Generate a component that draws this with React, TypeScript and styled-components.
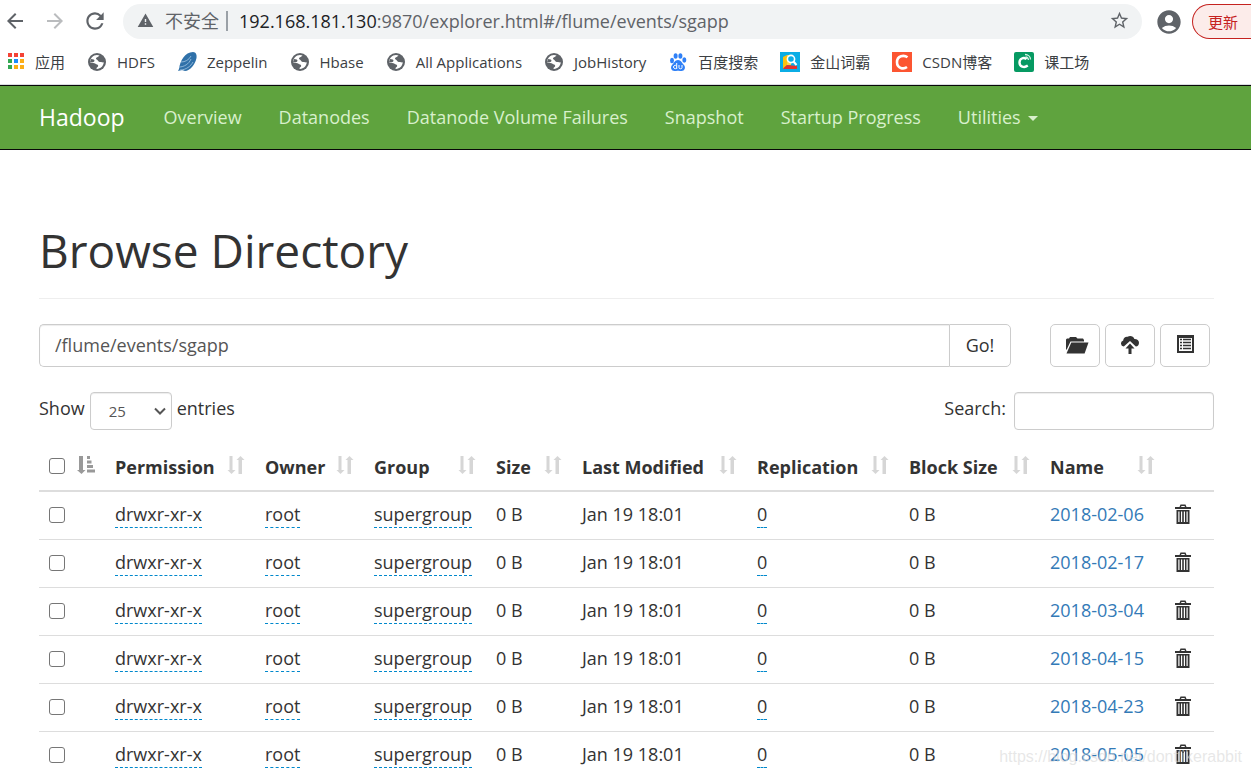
import React from "react";
import styled, { createGlobalStyle } from "styled-components";
import {
  MdArrowBack,
  MdArrowForward,
  MdRefresh,
  MdWarning,
  MdStarBorder,
  MdAccountCircle,
} from "react-icons/md";

const GlobalStyle = createGlobalStyle`
  *, *::before, *::after { box-sizing: border-box; }
  body {
    margin: 0;
    background: #fff;
    color: #333;
    font-family: "Open Sans", "Noto Sans", "Noto Sans CJK SC", sans-serif;
    font-size: 18px;
    line-height: 26px;
  }
  a { text-decoration: none; }
  button, input, select { font-family: inherit; }
`;

const Window = styled.div`
  position: relative;
  display: flex;
  flex-direction: column;
  height: 100vh;
  overflow: hidden;
`;

/* ---------- browser chrome ---------- */

const Toolbar = styled.div`
  display: flex;
  align-items: center;
  height: 43px;
  padding-left: 3px;
  flex: none;
`;

const ToolButton = styled.button<{ $faded?: boolean }>`
  display: flex;
  align-items: center;
  justify-content: center;
  width: 40px;
  height: 35px;
  padding: 0 16px 2px 0;
  border: 0;
  background: none;
  color: ${(p) => (p.$faded ? "#babcbe" : "#5f6368")};
  svg { flex: none; }
`;

const AddressBar = styled.div`
  display: flex;
  flex: 1;
  align-items: center;
  height: 35px;
  padding: 0 12px 2px 14px;
  border-radius: 18px;
  background: #f1f3f4;
  color: #5f6368;
`;

const Insecure = styled.span`
  display: flex;
  align-items: center;
  gap: 11px;
  padding-right: 7px;
`;

const Divider = styled.span`
  width: 2px;
  height: 20px;
  margin-right: 11px;
  background: #9aa0a6;
`;

const Address = styled.div`
  flex: 1;
  white-space: nowrap;
  b { font-weight: 400; color: #202124; }
`;

const StarButton = styled.button`
  display: flex;
  padding: 0;
  border: 0;
  background: none;
  color: #5f6368;
`;

const ProfileButton = styled(StarButton)`
  margin: 0 9px 0 13px;
`;

const UpdateButton = styled.button`
  height: 35px;
  padding: 0 13px 0 15px;
  border: 1px solid #c5221f;
  border-right: 0;
  border-radius: 18px 0 0 18px;
  background: #fcecea;
  color: #c5221f;
  font-size: 15px;
`;

const Bookmarks = styled.nav`
  display: flex;
  align-items: center;
  gap: 22px;
  height: 42px;
  padding: 0 5px 4px;
  border-bottom: 1px solid #dadce0;
  flex: none;
`;

const Bookmark = styled.a`
  display: flex;
  align-items: center;
  gap: 10px;
  color: #3c4043;
  font-size: 15px;
  line-height: 20px;
  white-space: nowrap;
`;

/* ---------- hadoop page ---------- */

const Page = styled.div`
  flex: 1;
  min-height: 0;
  overflow: hidden;
`;

const Navbar = styled.nav`
  display: flex;
  align-items: center;
  gap: 37px;
  height: 65px;
  padding: 0 39px 2px;
  border-top: 1px solid #080808;
  border-bottom: 1px solid #080808;
  background: #5fa33e;
`;

const Brand = styled.a`
  margin-right: 2px;
  color: #fff;
  font-size: 23px;
`;

const NavLink = styled.a`
  color: #d8f0cc;
  white-space: nowrap;
`;

const Caret = styled.span`
  display: inline-block;
  margin-left: 7px;
  border: 5px solid transparent;
  border-top-color: currentColor;
  border-bottom: 0;
  vertical-align: middle;
`;

const Container = styled.main`
  padding: 72px 37px 0 39px;
`;

const PageHeader = styled.header`
  padding-bottom: 20px;
  border-bottom: 1px solid #eee;
  margin-bottom: 25px;
`;

const Title = styled.h1`
  margin: 0;
  font-size: 46px;
  font-weight: 400;
  line-height: 56px;
`;

const PathRow = styled.form`
  display: flex;
  height: 43px;
  margin-bottom: 25px;
`;

const PathInput = styled.input`
  flex: 1;
  min-width: 0;
  padding: 0 15px 2px;
  border: 1px solid #ccc;
  border-right: 0;
  border-radius: 5px 0 0 5px;
  box-shadow: inset 0 1px 1px rgba(0, 0, 0, 0.075);
  color: #555;
  font-size: 18px;
`;

const GoButton = styled.button`
  width: 62px;
  padding: 0 0 2px;
  border: 1px solid #ccc;
  border-radius: 0 5px 5px 0;
  background: #fff;
  color: #333;
  font-size: 18px;
`;

const Actions = styled.div`
  display: flex;
  gap: 5px;
  margin: 0 4px 0 39px;
`;

const ActionButton = styled.button`
  display: flex;
  align-items: center;
  justify-content: center;
  width: 50px;
  padding: 0 0 2px;
  border: 1px solid #ccc;
  border-radius: 5px;
  background: #fff;
  color: #333;
`;

const Controls = styled.div`
  display: flex;
  justify-content: space-between;
  height: 38px;
  margin-bottom: 13px;
`;

const ControlLabel = styled.label`
  display: flex;
  gap: 5px;
  line-height: 32px;
`;

const SelectWrap = styled.span`
  display: grid;
  align-items: center;
  & > * { grid-area: 1 / 1; }
  svg { justify-self: end; margin-right: 6px; pointer-events: none; }
`;

const LengthSelect = styled.select`
  width: 82px;
  height: 38px;
  padding: 0 18px;
  border: 1px solid #ccc;
  border-radius: 4px;
  box-shadow: inset 0 1px 1px rgba(0, 0, 0, 0.075);
  background: #fff;
  color: #555;
  font-size: 15px;
  appearance: none;
`;

const SearchInput = styled.input`
  width: 200px;
  height: 38px;
  margin-left: 3px;
  padding: 0 12px;
  border: 1px solid #ccc;
  border-radius: 4px;
  box-shadow: inset 0 1px 1px rgba(0, 0, 0, 0.075);
  font-size: 16px;
`;

const Table = styled.table`
  width: 100%;
  table-layout: fixed;
  border-collapse: collapse;
  white-space: nowrap;
`;

const HeadCell = styled.th`
  height: 48px;
  padding: 0 10px;
  border-bottom: 2px solid #ddd;
  text-align: left;
  font-weight: 700;
`;

const HeadContent = styled.div`
  display: flex;
  align-items: center;
  justify-content: space-between;
  svg { flex: none; margin-bottom: 4px; }
  input { margin-bottom: 2px; }
`;

const Cell = styled.td`
  height: 48px;
  padding: 0 10px 2px;
  border-bottom: 1px solid #ddd;
`;

const CheckCell = styled(Cell)`
  padding-bottom: 0;
`;

const Check = styled.input`
  display: block;
  appearance: none;
  width: 16px;
  height: 16px;
  margin: 0;
  border: 1px solid #767676;
  border-radius: 3px;
  background: #fff;
`;

const Editable = styled.span`
  padding-bottom: 1px;
  border-bottom: 1px dashed #08c;
`;

const NameLink = styled.a`
  color: #337ab7;
`;

const TrashButton = styled.button`
  display: flex;
  padding: 0;
  border: 0;
  background: none;
  color: #333;
`;

const Watermark = styled.div`
  position: absolute;
  right: 9px;
  bottom: 6px;
  color: rgba(215, 215, 215, 0.6);
  font-family: "Liberation Sans", sans-serif;
  font-size: 16px;
  line-height: 24px;
  pointer-events: none;
`;

/* ---------- icons ---------- */

const AppsIcon = () => (
  <svg width="20" height="20">
    {["#f44336", "#f44336", "#f44336", "#34a853", "#1a8cff", "#fbae17", "#34a853", "#fbae17", "#fbae17"].map(
      (c, i) => (
        <rect key={i} x={3 + (i % 3) * 6} y={1 + Math.floor(i / 3) * 6} width="4" height="4" fill={c} />
      ),
    )}
  </svg>
);

const GlobeIcon = () => (
  <svg width="20" height="20" viewBox="0 0 20 20">
    <circle cx="10" cy="10" r="9" fill="#5f6368" />
    <path
      d="M12.500 3.500C11.800 5 9.500 4.800 9 6.300c-.3 1.300 1.500 1.500 2 2.500.4.900 1.600 1.400 3 1.300 1 0 1.800.5 2.800.2-.3 3.600-3.200 6.500-6.800 6.700-.5-.1-.8-.5-.5-1 .6-.9 1.700-1 1.700-2.200 0-1.300-1.800-1.300-2.700-2C7.400 10.900 5.500 11.300 3 10.300 3 6.300 6.100 3 10 3c.9 0 1.700.2 2.500.5z"
      fill="#fff"
    />
    <path d="M4 6.800c1 .8 2.600.3 3.300 1.300.6 1-.3 2-1.700 2.200L3 10z" fill="#5f6368" />
  </svg>
);

const ZeppelinIcon = () => (
  <svg width="20" height="20" viewBox="0 0 20 20">
    <path d="M2 17C3 9 8 0 16 0c3 0 4 3 3.500 6C18.500 12 13 19 8 19l-3-1-4 1z" fill="#3071a9" />
    <path
      d="M2 15c5 0 10-3 12-8M4 10c4 0 8-2 10-6M3 18c6 0 11-4 13-8"
      stroke="#a5c8e4"
      strokeWidth=".8"
      fill="none"
    />
  </svg>
);

const BaiduIcon = () => (
  <svg width="20" height="20" viewBox="0 0 20 20" fill="#2f80f7">
    <ellipse cx="4" cy="8.500" rx="2" ry="2.700" />
    <ellipse cx="7.600" cy="4" rx="2" ry="2.800" />
    <ellipse cx="12.400" cy="4" rx="2" ry="2.800" />
    <ellipse cx="16.300" cy="8" rx="2" ry="2.700" />
    <path d="M10 8c-3 0-4 3-6 5-2 2.500-.6 6 2.500 6 1.500 0 2-.3 3.500-.3s2 .3 3.500.3c3.100 0 4.500-3.500 2.500-6-2-2-3-5-6-5z" />
    <path
      d="M8.700 11v6M8.500 14.200a1.600 1.600 0 1 0 0 1.600M11 13v2.500q0 1.300 1.500 1.300t1.500-1.300V13"
      fill="none"
      stroke="#fff"
      strokeWidth="1"
    />
  </svg>
);

const JinshanIcon = () => (
  <svg width="20" height="20" viewBox="0 0 20 20">
    <rect width="20" height="20" fill="#0bade5" />
    <path d="M3 5l4-2v10l-4 4z" fill="#ffc20e" />
    <path d="M3 16.500L7 13l10 1v3H4z" fill="#e5322d" />
    <path d="M7 3h4v10H7z" fill="#fbd54a" />
    <circle cx="11" cy="7" r="3.600" fill="#0bade5" stroke="#fff" strokeWidth="1.600" />
    <path d="M13.500 9.500l3 3.500" stroke="#fff" strokeWidth="2" />
  </svg>
);

const CsdnIcon = () => (
  <svg width="20" height="20" viewBox="0 0 20 20">
    <rect width="20" height="20" fill="#fc5531" />
    <path d="M15.500 5.300C12 2.800 5 3.500 5 10.300c0 6.200 6.500 7.200 10 4.700" fill="none" stroke="#fff" strokeWidth="2.600" />
  </svg>
);

const KgcIcon = () => (
  <svg width="20" height="20" viewBox="0 0 20 20">
    <rect width="20" height="20" rx="2" fill="#069a62" />
    <path d="M12.500 7.200C9.500 4.700 5.500 6.700 5.500 10.400c0 4.100 4.500 5.900 8.300 3.200" fill="none" stroke="#fff" strokeWidth="2.400" />
    <path d="M11 2.500c3 0 5.500 2 5.500 5M11.500 5c1.800.2 2.800 1.200 3 3" fill="none" stroke="#d4f1e5" strokeWidth="1.300" />
  </svg>
);

const FolderOpenIcon = () => (
  <svg width="28" height="18" viewBox="-4 0 28 18" fill="currentColor">
    <path d="M1 13V3.500L2 2.500h2L5 1h6l1.500 1.500H18L19 4v1.500H5.500L1.500 14z" />
    <path d="M6.300 6.500H23.500L19.600 17.500H1.500z" />
  </svg>
);

const CloudUploadIcon = () => (
  <svg width="20" height="20" viewBox="0 0 20 20" fill="currentColor">
    <path d="M3.800 11.500a3 3 0 0 1-.6-5.900C3.300 2.800 5.500 1.300 7.700 1.700 9.500.300 13.700.8 14.400 4c2.600-.1 4.600 1.300 4.600 3.800 0 2.200-1.300 3.700-3.200 3.700L10 6z" />
    <path d="M10 8.500l4.500 5h-3V19h-3v-5.500h-3z" />
  </svg>
);

const ListAltIcon = () => (
  <svg width="18" height="20" viewBox="0 0 18 20">
    <path fillRule="evenodd" d="M1 0h17v18H1zM3 3v13h13V3z" fill="currentColor" />
    <path d="M4 4.500h2M4 7.500h2M4 10.500h2M4 13.500h2M7 4.500h8M7 7.500h8M7 10.500h8M7 13.500h8" stroke="currentColor" strokeWidth="1.600" />
  </svg>
);

const SortIcon = () => (
  <svg width="18" height="18" viewBox="0 0 18 18" fill="#d6d6d6">
    <path d="M2.500 0h3v14H8.500L4.500 18 .5 14h2z" />
    <path d="M11.500 18h3.500V4h2.500L13.500 0 9.500 4h2z" />
  </svg>
);

const SortedIcon = () => (
  <svg width="18" height="18" viewBox="0 0 18 18" fill="#999">
    <path d="M2 0h4v14h2.500L4.500 18 0 14h2z" />
    <path d="M10 0h3v3h-3zM10 4.500h4.500v3H10zM10 9h6v3h-6zM10 13.500h8v3h-8z" />
  </svg>
);

const TrashIcon = () => (
  <svg width="16" height="20" viewBox="0 0 16 20" fill="currentColor">
    <path d="M0 3h4.500L5.500.5h5l1 2.500H16v2H0zM6 3h4l-.5-1h-3z" fillRule="evenodd" />
    <path d="M1.500 6h13v14h-13zM3.300 7.500V18h1.200V7.500zM6 7.500V18h1.200V7.500zM8.800 7.500V18H10V7.500zM11.500 7.500V18h1.200V7.500z" fillRule="evenodd" />
  </svg>
);

const ChevronIcon = () => (
  <svg width="12" height="8" viewBox="0 0 12 8">
    <path d="M1 1.500l5 5 5-5" fill="none" stroke="#555" strokeWidth="2" />
  </svg>
);

/* ---------- data ---------- */

const bookmarks: [string, React.FC][] = [
  ["应用", AppsIcon],
  ["HDFS", GlobeIcon],
  ["Zeppelin", ZeppelinIcon],
  ["Hbase", GlobeIcon],
  ["All Applications", GlobeIcon],
  ["JobHistory", GlobeIcon],
  ["百度搜索", BaiduIcon],
  ["金山词霸", JinshanIcon],
  ["CSDN博客", CsdnIcon],
  ["课工场", KgcIcon],
];

const navLinks = ["Overview", "Datanodes", "Datanode Volume Failures", "Snapshot", "Startup Progress"];

const columns: [string, number][] = [
  ["", 66],
  ["Permission", 150],
  ["Owner", 109],
  ["Group", 122],
  ["Size", 86],
  ["Last Modified", 175],
  ["Replication", 152],
  ["Block Size", 141],
  ["Name", 125],
];

const names = ["2018-02-06", "2018-02-17", "2018-03-04", "2018-04-15", "2018-04-23", "2018-05-05"];

export default function App() {
  return (
    <Window>
      <GlobalStyle />
      <Toolbar>
        <ToolButton aria-label="Back"><MdArrowBack size={24} /></ToolButton>
        <ToolButton aria-label="Forward" $faded><MdArrowForward size={24} /></ToolButton>
        <ToolButton aria-label="Reload"><MdRefresh size={26} /></ToolButton>
        <AddressBar>
          <Insecure><MdWarning size={17} />不安全</Insecure>
          <Divider />
          <Address>
            <b>192.168.181.130</b>:9870/explorer.html#/flume/events/sgapp
          </Address>
          <StarButton aria-label="Bookmark this page"><MdStarBorder size={21} /></StarButton>
        </AddressBar>
        <ProfileButton aria-label="Profile"><MdAccountCircle size={28} /></ProfileButton>
        <UpdateButton>更新</UpdateButton>
      </Toolbar>
      <Bookmarks aria-label="Bookmarks">
        {bookmarks.map(([label, Icon]) => (
          <Bookmark key={label} href="#"><Icon />{label}</Bookmark>
        ))}
      </Bookmarks>

      <Page>
        <Navbar aria-label="Main">
          <Brand href="#">Hadoop</Brand>
          {navLinks.map((label) => <NavLink key={label} href="#">{label}</NavLink>)}
          <NavLink href="#">Utilities<Caret /></NavLink>
        </Navbar>

        <Container>
          <PageHeader><Title>Browse Directory</Title></PageHeader>

          <PathRow onSubmit={(e) => e.preventDefault()}>
            <PathInput aria-label="Directory" defaultValue="/flume/events/sgapp" />
            <GoButton type="submit">Go!</GoButton>
            <Actions>
              <ActionButton type="button" aria-label="Create directory"><FolderOpenIcon /></ActionButton>
              <ActionButton type="button" aria-label="Upload files"><CloudUploadIcon /></ActionButton>
              <ActionButton type="button" aria-label="Cut and paste"><ListAltIcon /></ActionButton>
            </Actions>
          </PathRow>

          <Controls>
            <ControlLabel>
              Show
              <SelectWrap>
                <LengthSelect defaultValue="25">
                  <option>25</option>
                  <option>50</option>
                  <option>100</option>
                </LengthSelect>
                <ChevronIcon />
              </SelectWrap>
              entries
            </ControlLabel>
            <ControlLabel>
              Search:
              <SearchInput type="search" />
            </ControlLabel>
          </Controls>

          <Table>
            <colgroup>
              {columns.map(([label, width]) => <col key={label} style={{ width }} />)}
              <col style={{ width: 49 }} />
            </colgroup>
            <thead>
              <tr>
                {columns.map(([label], i) => (
                  <HeadCell key={label}>
                    <HeadContent>
                      {i === 0 ? <Check type="checkbox" aria-label="Select all" /> : label}
                      {i === 0 ? <SortedIcon /> : <SortIcon />}
                    </HeadContent>
                  </HeadCell>
                ))}
                <HeadCell />
              </tr>
            </thead>
            <tbody>
              {names.map((name) => (
                <tr key={name}>
                  <CheckCell><Check type="checkbox" aria-label={`Select ${name}`} /></CheckCell>
                  <Cell><Editable>drwxr-xr-x</Editable></Cell>
                  <Cell><Editable>root</Editable></Cell>
                  <Cell><Editable>supergroup</Editable></Cell>
                  <Cell>0 B</Cell>
                  <Cell>Jan 19 18:01</Cell>
                  <Cell><Editable>0</Editable></Cell>
                  <Cell>0 B</Cell>
                  <Cell><NameLink href="#">{name}</NameLink></Cell>
                  <Cell><TrashButton aria-label={`Delete ${name}`}><TrashIcon /></TrashButton></Cell>
                </tr>
              ))}
            </tbody>
          </Table>
        </Container>
      </Page>
      <Watermark>https://blog.csdn.net/dontlikerabbit</Watermark>
    </Window>
  );
}
